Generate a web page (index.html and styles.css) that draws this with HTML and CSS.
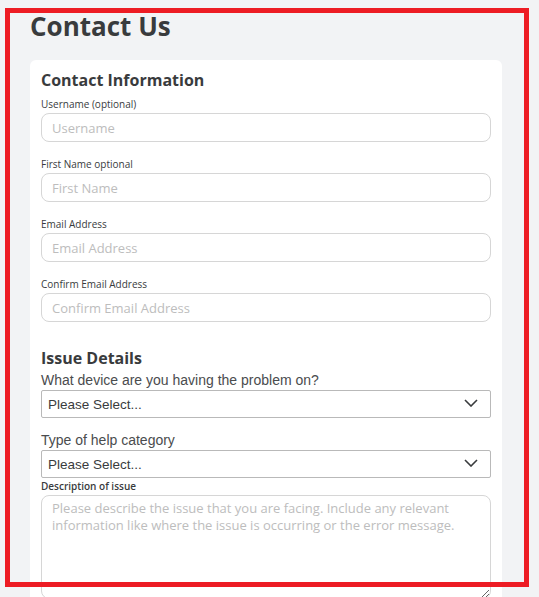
FILE: index.html
```html
<!DOCTYPE html>
<html lang="en">
<head>
    <meta charset="UTF-8">
    <meta name="viewport" content="width=device-width, initial-scale=1.0">
    <title>Contact Us</title>
    <link rel="stylesheet" href="styles.css">
</head>
<body>
    <div class="page">
        <h1>Contact Us</h1>

        <form class="card">
            <h2>Contact Information</h2>

            <div class="field">
                <label for="username">Username (optional)</label>
                <input type="text" id="username" placeholder="Username">
            </div>
            <div class="field">
                <label for="firstName">First Name optional</label>
                <input type="text" id="firstName" placeholder="First Name">
            </div>
            <div class="field">
                <label for="email">Email Address</label>
                <input type="text" id="email" placeholder="Email Address">
            </div>
            <div class="field">
                <label for="confirmEmail">Confirm Email Address</label>
                <input type="text" id="confirmEmail" placeholder="Confirm Email Address">
            </div>

            <h2 class="issue-title">Issue Details</h2>

            <div class="select-field">
                <label for="device">What device are you having the problem on?</label>
                <div class="select-wrap">
                    <select id="device">
                        <option>Please Select...</option>
                    </select>
                    <svg class="chevron" width="14" height="8" viewBox="0 0 14 8">
                        <polyline points="1,1 7,7 13,1" fill="none" stroke="#393b3d" stroke-width="1.6"/>
                    </svg>
                </div>
            </div>
            <div class="select-field">
                <label for="category">Type of help category</label>
                <div class="select-wrap">
                    <select id="category">
                        <option>Please Select...</option>
                    </select>
                    <svg class="chevron" width="14" height="8" viewBox="0 0 14 8">
                        <polyline points="1,1 7,7 13,1" fill="none" stroke="#393b3d" stroke-width="1.6"/>
                    </svg>
                </div>
            </div>

            <div class="field description">
                <label for="description">Description of issue</label>
                <textarea id="description" placeholder="Please describe the issue that you are facing. Include any relevant information like where the issue is occurring or the error message."></textarea>
            </div>
        </form>
    </div>

    <div class="highlight"></div>
</body>
</html>
```

FILE: styles.css
```css
body {
    margin: 0;
    background-color: #f2f3f5;
    font-family: "Open Sans", Arial, sans-serif;
    color: #393b3d;
}
.page {
    width: 472px;
    padding: 10px 0 0 30px;
}
h1 {
    margin: 0 0 18px;
    font-size: 26px;
    line-height: 32px;
    font-weight: 700;
}
.card {
    background-color: #ffffff;
    border-radius: 6px 6px 0 0;
    padding: 10px 11px 0;
}
h2 {
    margin: 0 0 7px;
    font-size: 16px;
    line-height: 20px;
    font-weight: 700;
}
.field {
    display: flex;
    flex-direction: column;
    margin-bottom: 15px;
}
.field label {
    font-size: 10px;
    line-height: 14px;
    margin-bottom: 2px;
}
.field input,
.field textarea {
    box-sizing: border-box;
    width: 100%;
    height: 29px;
    padding: 0 10px;
    border: 1px solid #d6d6d6;
    border-radius: 8px;
    font-family: "Open Sans", Arial, sans-serif;
    font-size: 13px;
    color: #393b3d;
    background-color: #ffffff;
}
input::placeholder,
textarea::placeholder {
    color: #bdbdbd;
}
.issue-title {
    margin-top: 26px;
    margin-bottom: 4px;
}
.select-field {
    display: flex;
    flex-direction: column;
    margin-bottom: 14px;
    font-family: "Liberation Sans", Arial, sans-serif;
}
.select-field label {
    font-size: 14px;
    line-height: 16px;
    margin-bottom: 2px;
    color: #4a4c4e;
}
.select-wrap {
    position: relative;
}
.select-wrap select {
    box-sizing: border-box;
    width: 100%;
    height: 28px;
    padding: 0 6px;
    border: 1px solid #b9b9b9;
    border-radius: 2px;
    background-color: #ffffff;
    font-family: "Liberation Sans", Arial, sans-serif;
    font-size: 13.5px;
    color: #393b3d;
    appearance: none;
    -webkit-appearance: none;
}
.chevron {
    position: absolute;
    right: 13px;
    top: 9px;
    pointer-events: none;
}
.select-field + .description {
    margin-top: -13px;
}
.description label {
    font-weight: 600;
}
.description textarea {
    height: 104px;
    padding: 4px 10px;
    line-height: 17px;
    resize: vertical;
}
.highlight {
    position: absolute;
    left: 5px;
    top: 8px;
    width: 524px;
    height: 579px;
    box-sizing: border-box;
    border: 5px solid #ed1c24;
    pointer-events: none;
}
```
